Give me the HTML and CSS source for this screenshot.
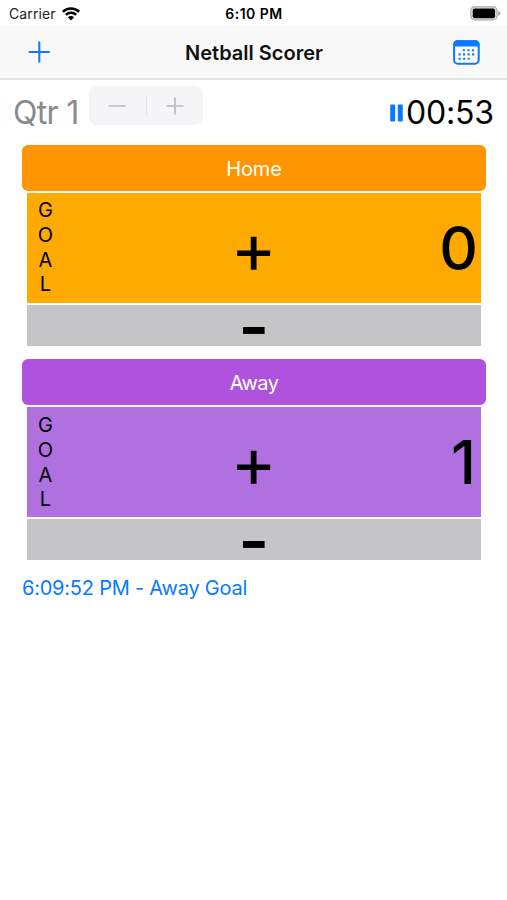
FILE: index.html
```html
<!DOCTYPE html>
<html lang="en">
<head>
<meta charset="utf-8">
<title>Netball Scorer</title>
<link rel="stylesheet" href="styles.css">
</head>
<body>
<div class="status">
  <div class="carrier"><span>Carrier</span>
    <svg width="18" height="14" viewBox="0 0 18 14" fill="none" stroke="#000" stroke-width="2.5"><path d="M.9 4.9a11.6 11.6 0 0 1 16.2 0M3.8 7.9a7.4 7.4 0 0 1 10.4 0"/><path d="M9 13.4L5.9 10.3a4.4 4.4 0 0 1 6.2 0z" fill="#000" stroke="none"/></svg>
  </div>
  <div class="clock">6:10 PM</div>
  <svg class="battery" width="31" height="15" viewBox="0 0 31 15"><rect x=".8" y=".8" width="26.2" height="13" rx="3.8" fill="#e8e8e8" stroke="#aaa" stroke-width="1.2"/><rect x="2.7" y="2.6" width="22.4" height="9.6" rx="2" fill="#000"/><path d="M28.3 5v4.8q1.9-.7 1.9-2.4T28.3 5z" fill="#999"/></svg>
</div>
<header class="nav">
  <svg class="add" width="22" height="22" viewBox="0 0 22 22" stroke="#087aff" stroke-width="2" stroke-linecap="round"><path d="M11.3 1.2v19.6M1.5 11h19.6"/></svg>
  <h1>Netball Scorer</h1>
  <svg class="calendar" width="27" height="25" viewBox="0 0 27 25"><rect x="1.1" y="1.3" width="24.6" height="22.4" rx="3.6" fill="#fff" stroke="#087aff" stroke-width="2"/><path d="M.3 6.4V4.5Q.3.3 4.5.3h17.8q4.2 0 4.2 4.2v1.9z" fill="#087aff"/><path d="M9.8 10.3h12M5.5 14.4h16.3M5.5 18.7h12" stroke="#087aff" stroke-width="2.1" stroke-dasharray="2.1 2.45"/></svg>
</header>
<div class="game">
  <div class="quarter">Qtr 1</div>
  <div class="stepper">
    <svg width="114" height="39" viewBox="0 0 114 39" fill="none" stroke="#bbbbbd" stroke-width="1.7"><path d="M19.5 20h17M77.5 20h17M86 11.5v17"/><path d="M57.5 10v19.5" stroke="#e4e4e6" stroke-width="1"/></svg>
  </div>
  <div class="timer">
    <svg width="13" height="18" viewBox="0 0 13 18" fill="#087aff"><rect x=".2" y=".4" width="5" height="17" rx="1"/><rect x="7.8" y=".4" width="5" height="17" rx="1"/></svg>
    <span>00:53</span>
  </div>
</div>
<main>
  <section class="team home">
    <div class="name">Home</div>
    <div class="goal"><div class="word"><span>G</span><span>O</span><span>A</span><span>L</span></div><div class="plus">+</div><div class="score">0</div></div>
    <div class="minus">-</div>
  </section>
  <section class="team away">
    <div class="name">Away</div>
    <div class="goal"><div class="word"><span>G</span><span>O</span><span>A</span><span>L</span></div><div class="plus">+</div><div class="score">1</div></div>
    <div class="minus">-</div>
  </section>
  <div class="log">6:09:52 PM - Away Goal</div>
</main>
</body>
</html>
```
FILE: styles.css
```css
* { box-sizing: border-box; }
body { margin: 0; background: #fff; color: #000; font-family: Inter, "Liberation Sans", sans-serif; height: 900px; overflow: hidden; }
svg { display: block; flex: none; }
.status { height: 26px; display: grid; grid-template-columns: 1fr auto 1fr; align-items: center; padding: 1px 6px 0 9px; font-size: 14px; }
.carrier { display: flex; align-items: center; gap: 6px; color: #222; letter-spacing: .1px; }
.clock { font-weight: 600; letter-spacing: .5px; margin-left: -2px; }
.battery { justify-self: end; }
.nav { height: 54px; display: grid; grid-template-columns: 1fr auto 1fr; align-items: center; padding: 0 27px 0 28px; background: #f8f8f8; border-bottom: 2px solid #e4e4e4; }
.nav h1 { margin: 0; padding-top: 1px; font-size: 20px; font-weight: 600; color: #111; }
.calendar { justify-self: end; }
.game { height: 65px; display: flex; align-items: center; padding: 0 13px; font-size: 32px; }
.quarter { width: 76px; color: #8a8a8a; letter-spacing: -.7px; white-space: nowrap; }
.stepper { align-self: flex-start; margin-top: 6px; height: 39px; border-radius: 8px; background: #f5f5f7; }
.timer { margin-left: auto; display: flex; align-items: center; gap: 3px; letter-spacing: -.15px; }
main { padding: 0 21px 0 22px; }
.team { height: 201px; margin-bottom: 13px; }
.name { height: 46px; padding-top: 2px; display: flex; align-items: center; justify-content: center; border-radius: 6px; font-size: 20px; letter-spacing: -.1px; color: #fff; }
.home .name { background: #ff9500; }
.away .name { background: #af52de; letter-spacing: -.6px; }
.goal { height: 110px; margin: 2px 5px 0 4.5px; display: grid; grid-template-columns: 1fr auto 1fr; }
.home .goal { background: #ffaa00; }
.away .goal { background: #b070df; }
.word { padding: 5px 0 0 8px; width: 30px; display: flex; flex-direction: column; align-items: center; font-size: 20px; line-height: 24.8px; }
.away .word { padding-top: 6px; }
.plus { font-size: 70px; font-weight: 400; line-height: 110px; }
.score { justify-self: end; padding-right: 3px; font-size: 60px; font-weight: 500; line-height: 110px; }
.away .score { padding-right: 5px; }
.minus { height: 41px; margin: 2px 5px 0 4.5px; background: #c5c5c7; text-align: center; font-size: 66px; font-weight: 600; line-height: 42px; }
.log { padding-top: 3px; font-size: 20px; line-height: 24px; letter-spacing: -.22px; color: #087aff; white-space: nowrap; }
```
